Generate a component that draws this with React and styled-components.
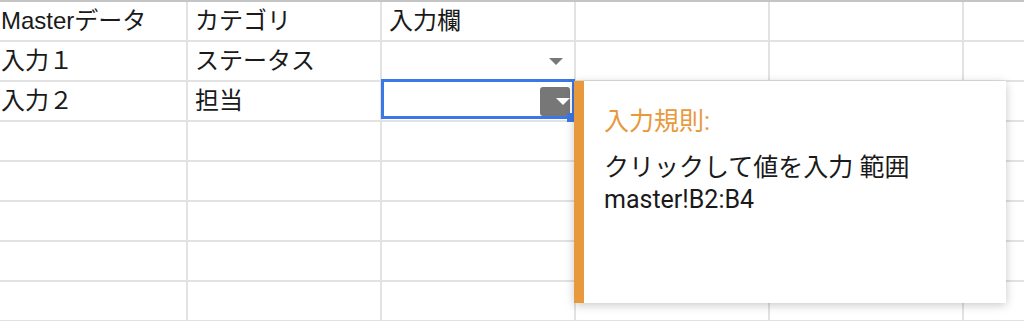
import React from 'react';
import styled, { createGlobalStyle } from 'styled-components';

const rows = [
  ['Masterデータ', 'カテゴリ', '入力欄', '', '', ''],
  ['入力１', 'ステータス', { dropdown: true }, '', '', ''],
  ['入力２', '担当', { dropdown: true, selected: true }, '', '', ''],
  ['', '', '', '', '', ''],
  ['', '', '', '', '', ''],
  ['', '', '', '', '', ''],
  ['', '', '', '', '', ''],
  ['', '', '', '', '', ''],
];

function App() {
  return (
    <>
      <GlobalStyle />
      <Page>
        <Sheet>
          {rows.map((row, r) =>
            row.map((value, c) => {
              const key = `${r}-${c}`;
              if (value && typeof value === 'object') {
                return (
                  <Cell key={key}>
                    {value.selected ? (
                      <>
                        <Selection>
                          <Handle />
                        </Selection>
                        <DropButton>
                          <Caret $light />
                        </DropButton>
                      </>
                    ) : (
                      <Caret />
                    )}
                  </Cell>
                );
              }
              return <Cell key={key}>{value}</Cell>;
            })
          )}
        </Sheet>

        <RulePopup>
          <RuleTitle>入力規則:</RuleTitle>
          <RuleText>
            クリックして値を入力 範囲
            <br />
            master!B2:B4
          </RuleText>
        </RulePopup>
      </Page>
    </>
  );
}

export default App;

const GlobalStyle = createGlobalStyle`
  html, body {
    margin: 0;
    padding: 0;
    background: #fff;
    overflow: hidden;
  }
`;

const Page = styled.div`
  position: relative;
  width: 1024px;
  height: 321px;
  overflow: hidden;
`;

const Sheet = styled.div`
  display: grid;
  grid-template-columns: repeat(6, 194px);
  grid-auto-rows: 40px;
  width: max-content;
  margin-left: -6px;
  border-top: 2px solid #c4c4c4;
`;

const Cell = styled.div`
  position: relative;
  box-sizing: border-box;
  display: flex;
  align-items: center;
  padding: 0 7px;
  border-right: 2px solid #e2e2e2;
  border-bottom: 2px solid #e2e2e2;
  font-family: 'Liberation Sans', 'Noto Sans CJK JP', sans-serif;
  font-size: 24px;
  line-height: 26px;
  color: #1a1a1a;
  white-space: nowrap;
`;

const Caret = styled.span`
  width: 0;
  height: 0;
  margin-left: auto;
  margin-right: ${({ $light }) => ($light ? '0' : '4px')};
  border-left: 7px solid transparent;
  border-right: 7px solid transparent;
  border-top: 7px solid ${({ $light }) => ($light ? '#fff' : '#787878')};
`;

const Selection = styled.div`
  position: absolute;
  top: -3px;
  left: -1px;
  width: 194px;
  height: 40px;
  box-sizing: border-box;
  border: 3px solid #3b78e7;
  pointer-events: none;
`;

const Handle = styled.div`
  position: absolute;
  right: -3px;
  bottom: -6px;
  width: 8px;
  height: 9px;
  background: #3b78e7;
`;

const DropButton = styled.div`
  display: flex;
  align-items: center;
  justify-content: center;
  width: 30px;
  height: 29px;
  margin-left: auto;
  margin-right: -3px;
  border-radius: 3px;
  background: #777;
`;

const RulePopup = styled.div`
  position: absolute;
  left: 574px;
  top: 81px;
  width: 432px;
  height: 222px;
  box-sizing: border-box;
  padding: 25px 24px 0 20px;
  background: #fff;
  border-left: 10px solid #e8993b;
  box-shadow: 0 2px 9px rgba(0, 0, 0, 0.22);
  font-family: Roboto, 'Noto Sans CJK JP', sans-serif;
  font-size: 25px;
  line-height: 32px;
  z-index: 2;
`;

const RuleTitle = styled.div`
  color: #e8993b;
`;

const RuleText = styled.div`
  margin-top: 14px;
  color: #1a1a1a;
`;
